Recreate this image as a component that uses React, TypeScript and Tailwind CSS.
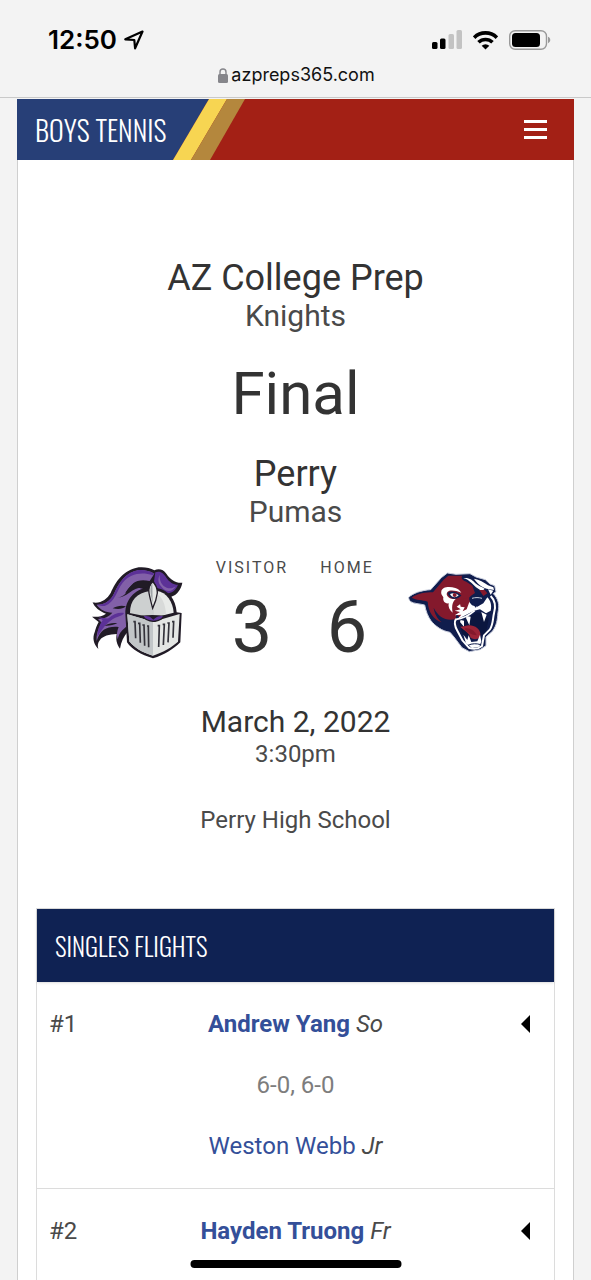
interface Player {
  name: string;
  grade: string;
}

interface Flight {
  number: string;
  winner: Player;
  score?: string;
  loser?: Player;
}

const flights: Flight[] = [
  {
    number: '#1',
    winner: { name: 'Andrew Yang', grade: 'So' },
    score: '6-0, 6-0',
    loser: { name: 'Weston Webb', grade: 'Jr' },
  },
  { number: '#2', winner: { name: 'Hayden Truong', grade: 'Fr' } },
];

function StatusBar() {
  return (
    <div className="flex items-center justify-between pl-12 pr-10 pt-6 text-black">
      <div className="flex items-center gap-[7px]">
        <span className="text-[26px] leading-8 font-semibold">12:50</span>
        <svg width="20" height="20" viewBox="0 0 20 20" fill="none" stroke="currentColor" strokeWidth="2.2" strokeLinejoin="round" aria-hidden="true">
          <path d="M18.500 1.500 1.300 9.300l9 .7.800 8.300z" />
        </svg>
      </div>
      <div className="flex items-center gap-[11px]">
        <svg width="30" height="20" viewBox="0 0 30 20" aria-hidden="true">
          <rect x="0" y="12" width="5.500" height="7" rx="1.500" />
          <rect x="8" y="8.500" width="5.500" height="10.500" rx="1.500" />
          <rect x="16.500" y="4" width="5.500" height="15" rx="1.500" fill="#c3c3c3" />
          <rect x="24.500" y="0" width="5.500" height="19" rx="1.500" fill="#c3c3c3" />
        </svg>
        <svg width="25" height="19" viewBox="0 0 25 19" fill="none" stroke="currentColor" strokeWidth="3.600" aria-hidden="true">
          <path d="M1.100 6.600a16.200 16.200 0 0 1 22.800 0" />
          <path d="M5.500 11.300a10 10 0 0 1 14 0" />
          <path d="M12.500 18.600 8.700 14.800a5.500 5.500 0 0 1 7.600 0z" fill="currentColor" stroke="none" />
        </svg>
        <svg width="42" height="20" viewBox="0 0 42 20" aria-hidden="true">
          <rect x="0.700" y="0.700" width="36.800" height="18.600" rx="5.500" fill="none" stroke="#999" strokeWidth="1.400" />
          <rect x="3" y="3" width="28" height="14" rx="3.500" />
          <path d="M39 6.800c3 1.200 3 5.200 0 6.400z" fill="#999" />
        </svg>
      </div>
    </div>
  );
}

function AddressBar() {
  return (
    <div className="flex items-center justify-center gap-[3px] pt-1 pl-[2px] text-[#111]">
      <svg width="10" height="15" viewBox="0 0 10 15" aria-hidden="true">
        <rect x="0" y="6" width="10" height="9" rx="1.500" fill="#86868b" />
        <path d="M2 7V4a3 3 0 0 1 6 0v3" fill="none" stroke="#86868b" strokeWidth="1.400" />
      </svg>
      <span className="text-[18px] leading-[30px]">azpreps365.com</span>
    </div>
  );
}

function Banner() {
  return (
    <header className="flex h-[61px] items-stretch bg-[#a32015]">
      <h1 className="flex w-[156px] items-center bg-[#273f77] pl-[18px] whitespace-nowrap font-[Oswald,sans-serif] text-[28px] font-light text-white">
        BOYS TENNIS
      </h1>
      <svg width="72" height="61" viewBox="0 0 72 61" aria-hidden="true">
        <path d="M0 0h36L0 61z" fill="#273f77" />
        <path d="M36 0h18L18 61H0z" fill="#f7d552" />
        <path d="M54 0h18L37 61H18z" fill="#b4873d" />
      </svg>
      <button type="button" aria-label="Menu" className="ml-auto mr-[27px] text-white">
        <svg width="23" height="19" viewBox="0 0 23 19" aria-hidden="true">
          <path d="M0 1.500h23M0 9.500h23M0 17.500h23" stroke="currentColor" strokeWidth="3" />
        </svg>
      </button>
    </header>
  );
}

function KnightLogo() {
  return (
    <svg width="115" height="115" viewBox="3 3 345 345" role="img" aria-label="Knights">
      <path d="M37 142c24 5 43-8 55-28 16-34 36-68 84-77 18-2 34 2 47 9 13-6 27-3 36 10 14 20 30 29 48 27-4 20-15 35-30 41l-58 31-73 35-4 42c-10 12-19 28-22 49-10-14-13-27-10-44-22 1-42 6-50 18-7 8-8 17-5 27-15-14-18-34-11-50 3-12 7-23 12-31l-20-16c16 2 30-1 42-9-20-8-34-19-41-36z" fill="#211b26" />
      <path d="M50 149c22 1 40-9 51-31 16-36 36-66 75-73 17-1 34 3 47 11l-14 22c-32-7-58 1-74 36 16-14 38-20 61-10-22 10-38 26-46 50-8 14-12 38-10 60l-13 12c-9 9-12 19-14 27-4-14-2-25 3-37-31-3-55 5-66 42-1-18 3-36 16-54l-12-12c19-1 34-8 43-19-20-1-37-9-47-24z" fill="#8260a8" />
      <path d="M86 190c12-12 28-18 46-16-2 5-10 9-18 11-22 6-43 28-62 60 0-18 5-35 16-49l-12-10c11 2 21 5 30 4z" fill="#5c3197" />
      <path d="M98 160c12-7 26-10 40-6-10 8-22 10-40 6zM74 212c12-7 25-9 38-7-12 5-24 8-38 7z" fill="#211b26" />
      <path d="M226 52c15-6 26 4 33 16 9 13 21 21 35 21-6 15-14 22-28 26-14 2-22-6-34-8l-10-28z" fill="#5c3197" />
      <path d="M50 149c22 1 40-9 51-31 16-36 36-66 75-73 17-1 34 3 47 11l-4 5c-34-11-68-6-91 22-18 23-22 58-54 70-9 0-18-2-24-4z" fill="#5c3197" />
      <path d="M146 76c20-22 52-24 72-11-16-1-30 1-44 9-22 12-30 32-46 46 2-16 8-32 18-44z" fill="#8260a8" />
      <path d="M136 116c13-26 38-46 70-33l-2 16c-22-4-40 2-56 14-12 9-24 14-36 15 10-2 18-6 24-12z" fill="#211b26" />
      <path d="M239 59c-1 19 6 32 21 39 9 4 20 2 27-4-10 20-31 17-42 2-11-12-12-23-6-37z" fill="#8260a8" />
      <path d="M136 175c0-38 25-72 71-78l11-18 15 21c33 5 54 33 57 72l15 2-4 88c-20 20-48 38-82 48-37-11-63-26-78-48z" fill="#211b26" />
      <path d="M150 174c0-37 20-61 60-66l10 41v39l-72-14z" fill="#cdd0d0" />
      <path d="M220 145l10-38c30 5 49 33 51 66l-61 15z" fill="#e8eae8" />
      <path d="M220 145l8-30c18 10 28 32 30 62l-38 12z" fill="#d8dad9" />
      <path d="M218 80c-9 8-13 20-11 34 3 16 7 31 11 46 7-15 12-30 14-46 0-14-5-26-14-34z" fill="#e4e6e4" stroke="#211b26" strokeWidth="4" />
      <path d="M217 84c-9 14-6 34 1 60z" fill="#9ea3a7" />
      <path d="M142 178l77 22 80-23-5 83c-19 17-43 31-75 42-35-10-57-25-71-43z" fill="#e4e6e4" />
      <path d="M142 178l77 22v102c-35-10-57-25-71-43z" fill="#c2c6c8" />
      <path d="M184 182c23-3 49-2 71 0-7 12-20 18-35 19-15-1-27-7-36-19z" fill="#211b26" />
      <path d="M191 184c10-2 18 0 24 6l5 4 5-4c8-6 16-8 24-6-6 9-17 13-29 13s-23-4-29-13z" fill="#5c3197" />
      <g fill="none" stroke="#33323a" strokeWidth="5">
        <path d="M160 200h5l2 50M174 205h5l2 58M187 210h5l2 62M201 213h4l1 64M236 276l2-64h-5M250 270l3-62h-5M264 262l3-58h-5M279 248l2-48h-5" />
      </g>
    </svg>
  );
}

function PumaLogo() {
  return (
    <svg width="110" height="105" viewBox="-15 -18 330 315" role="img" aria-label="Pumas">
      <path d="M8 94C20 82 45 73 74 71l32-36 18-14 26 4 42-2 18 10 28 8 14 13 14 5 4 18-8 6c14 14 20 34 14 56-2 25-4 38-16 56l-20 18v26l-18 12-32 6-22-12-24-32-12-14c-24-4-44-18-58-36-8-12-14-26-18-46-16-4-32-4-42-10-4-4-6-8-6-13z" fill="#101d4d" stroke="#c9cedd" strokeWidth="3" />
      {/* ear, forehead and cheek */}
      <path d="M17 95c18-13 40-16 64-16l32-38 14-12h42c-6 8 2 14 12 18l18 12 8 22-14 10 2 14-14 12-12 22c4 8 0 14-6 16l-12-10-2 14c-28 8-52-6-66-34 2 18 12 34 24 44-24-8-40-30-42-62-16-6-34-4-48-12z" fill="#84192c" />
      {/* fur around the eye */}
      <path d="M106 76c2-14 24-16 42-10 8 2 14 8 18 14-14-6-26-8-36-6-8 4-10 10-6 16 6 8 14 10 26 8-10 8-14 20-10 42-10-8-14-18-12-28-12 2-18-8-16-18-4-6-8-10-6-18z" fill="#fff" />
      <path d="M124 80c14-8 30-2 42 8-10 14-34 16-42-8z" fill="#101d4d" />
      <path d="M132 84c10-4 18-2 26 4-8 8-20 8-26-4z" fill="#fff" />
      <circle cx="146" cy="87" r="6" fill="#84192c" />
      {/* right brow */}
      <path d="M172 36c18-2 28 6 36 16 10 8 18 10 28 16l-8 8-18-12-14-14c-8-6-14-12-24-14z" fill="#fff" />
      <path d="M204 38c16 2 30 12 42 20l16 6 2 8-22-4c-18-6-28-16-38-30z" fill="#fff" />
      <path d="M220 72l16 0 8 10-12 8z" fill="#84192c" />
      <path d="M246 70l16 4-8 12z" fill="#fff" />
      {/* muzzle */}
      <path d="M166 112l22-6 10 12 16 4 18-10 12-18c10 10 14 24 10 40l-14 8-18-12-18 4-26 14-24 12 12-14-20 2 16-10-16-4 18-4-12-8z" fill="#fff" />
      <path d="M160 104l26-10 4 14-8 22-12 6 6-12-12-2z" fill="#84192c" />
      <path d="M190 94c14-6 32-6 44 0 0 12-12 18-22 20l-2 12-10-12c-8-4-12-10-10-20z" fill="#101d4d" />
      <path d="M198 97c10-3 20-3 30 0" fill="none" stroke="#c9cedd" strokeWidth="3" />
      {/* open mouth */}
      <path d="M156 166c22-4 40-14 52-26 12-2 20 2 28 12l12 6-8 42-20 14-26 4-24-14z" fill="#0b163f" />
      <path d="M150 158c-6 10-4 22 4 36l16 30 20 22c14 4 28 2 38-6l6-32 18-18c10-16 8-32 12-48 6-20 2-40-10-52" fill="none" stroke="#fff" strokeWidth="6" strokeLinejoin="round" />
      <path d="M150 160c22-2 40-12 56-26" fill="none" stroke="#fff" strokeWidth="5" />
      <path d="M182 150l-2 6 10 22 4-26zM164 162l-2 6 12 14v-18zM226 138l8 30 8-22z" fill="#fff" />
      <path d="M162 182c14 0 24-8 40-2 18 6 24 20 20 34-10 8-20 6-28 2-4-16-16-20-32-34z" fill="#9b2437" />
      <path d="M176 188c14-4 30 6 36 20-16-2-28-8-36-20z" fill="#84192c" />
      <path d="M172 206l12 16 4-14 8 20 18-2 8-20 4 20-6 16-22 4-18-14z" fill="#fff" />
      <path d="M186 238c12-6 26-6 38-2" fill="none" stroke="#101d4d" strokeWidth="3" />
    </svg>
  );
}

function Team({ school, mascot }: { school: string; mascot: string }) {
  return (
    <div>
      <h2 className="text-[36px] leading-10">{school}</h2>
      <p className="text-[30px] leading-9 text-[#4a4a4a]">{mascot}</p>
    </div>
  );
}

function TeamScore({ label, score }: { label: string; score: number }) {
  return (
    <div className="w-[95px]">
      <p className="text-[16px] leading-6 tracking-[2px] text-[#4a4a4a]">{label}</p>
      <p className="text-[72px] leading-24">{score}</p>
    </div>
  );
}

function Summary() {
  return (
    <section className="pt-[98px] text-center text-[#333]">
      <Team school="AZ College Prep" mascot="Knights" />
      <p className="my-6 text-[60px] leading-18">Final</p>
      <Team school="Perry" mascot="Pumas" />
      <div className="mt-[26px] flex items-start justify-center">
        <KnightLogo />
        <div className="ml-[9px] mr-[6px] flex">
          <TeamScore label="VISITOR" score={3} />
          <TeamScore label="HOME" score={6} />
        </div>
        <div className="pt-1">
          <PumaLogo />
        </div>
      </div>
      <p className="mt-7 text-[30px] leading-9">March 2, 2022</p>
      <p className="text-[24px] leading-7 text-[#4a4a4a]">3:30pm</p>
      <p className="mt-[38px] text-[24px] leading-7 text-[#4a4a4a]">Perry High School</p>
    </section>
  );
}

function PlayerLine({ player, winner }: { player: Player; winner?: boolean }) {
  return (
    <p>
      <a href="#" className={winner ? 'font-bold text-[#344f99]' : 'text-[#344f99]'}>{player.name}</a>{' '}
      <em>{player.grade}</em>
    </p>
  );
}

function Flights() {
  return (
    <section className="mx-[18px] mt-[74px] min-h-0 flex-1 border border-b-0 border-[#dcdcdc]">
      <h2 className="flex h-[73px] items-center bg-[#0f2253] pl-[18px] font-[Oswald,sans-serif] text-[25px] font-light text-white shadow-sm">
        SINGLES FLIGHTS
      </h2>
      <table className="w-full text-[24px] leading-[30px] text-[#4a4a4a]">
        <tbody>
          {flights.map((flight) => (
            <tr key={flight.number} className="border-b border-[#dcdcdc] align-top last:border-b-0">
              <td className="w-16 py-[27px] pl-3">{flight.number}</td>
              <td className="py-[27px] text-center">
                <div className="flex flex-col gap-[31px]">
                  <PlayerLine player={flight.winner} winner />
                  {flight.score && <p className="text-[#7d7d7d]">{flight.score}</p>}
                  {flight.loser && <PlayerLine player={flight.loser} />}
                </div>
              </td>
              <td className="w-16 py-[27px] pr-6">
                <button type="button" aria-label={`Show flight ${flight.number}`} className="ml-auto flex h-[30px] items-center">
                  <svg width="9" height="18" viewBox="0 0 9 18" aria-hidden="true">
                    <path d="M9 0v18L0 9z" fill="#000" />
                  </svg>
                </button>
              </td>
            </tr>
          ))}
        </tbody>
      </table>
    </section>
  );
}

export default function App() {
  return (
    <div className="flex h-screen flex-col overflow-hidden bg-[#f3f3f3] font-[Roboto,sans-serif]">
      <div className="h-[98px] shrink-0 border-b border-[#c9c9c9] font-[Inter,sans-serif]">
        <StatusBar />
        <AddressBar />
      </div>
      <main className="mx-[17px] mt-px flex min-h-0 flex-1 flex-col">
        <Banner />
        <div className="flex min-h-0 flex-1 flex-col border-x border-[#cfcfcf] bg-white">
          <Summary />
          <Flights />
        </div>
      </main>
      <div className="fixed bottom-3 left-1/2 h-2 w-[211px] -translate-x-1/2 rounded-full bg-black" />
    </div>
  );
}
